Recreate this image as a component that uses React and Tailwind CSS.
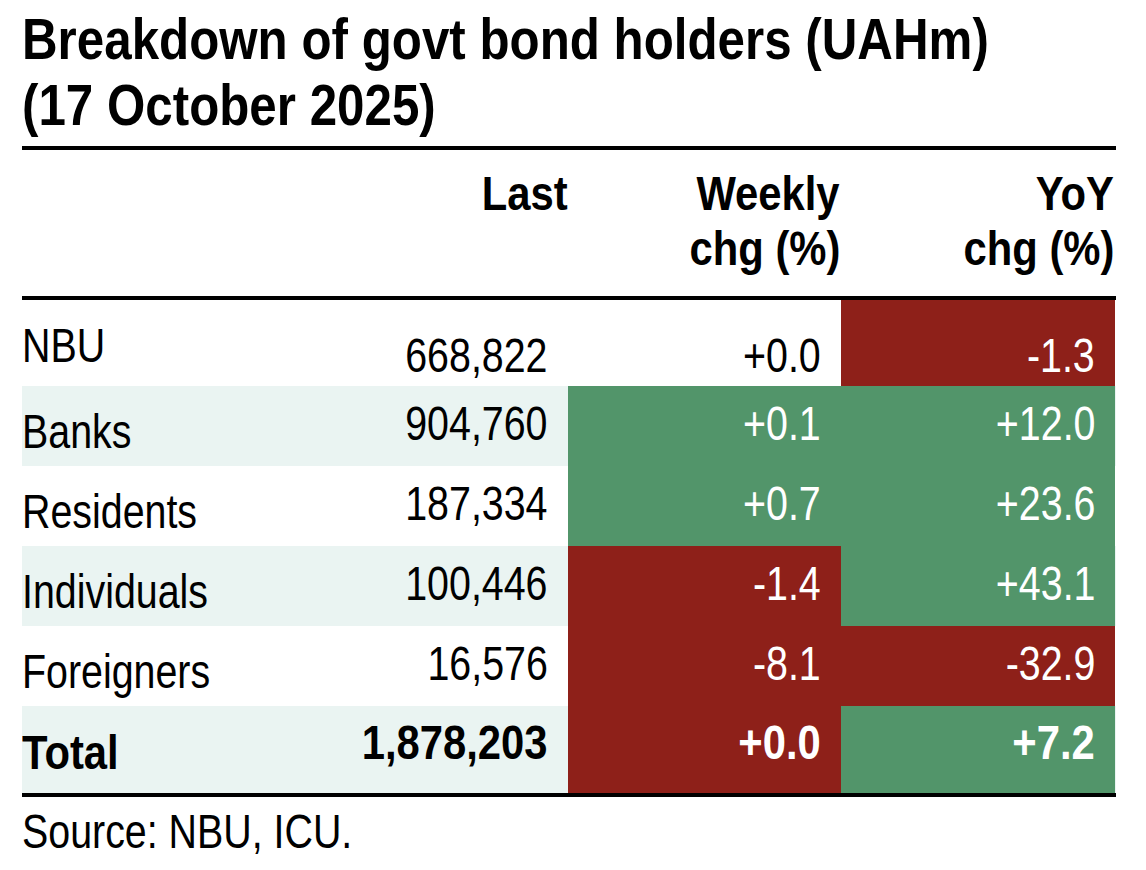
import React from 'react'

const RED = 'bg-[#8e2019] text-white'
const GREEN = 'bg-[#52956a] text-white'

const rows = [
    { name: 'NBU', last: '668,822', w: '+0.0', y: '-1.3', wc: '', yc: RED, bg: 'bg-white', h: 'h-[86px]', vp: 'pt-[32px]' },
    { name: 'Banks', last: '904,760', w: '+0.1', y: '+12.0', wc: GREEN, yc: GREEN, bg: 'bg-[#eaf4f2]', h: 'h-[80px]', vp: 'pt-[14px]' },
    { name: 'Residents', last: '187,334', w: '+0.7', y: '+23.6', wc: GREEN, yc: GREEN, bg: 'bg-white', h: 'h-[80px]', vp: 'pt-[14px]' },
    { name: 'Individuals', last: '100,446', w: '-1.4', y: '+43.1', wc: RED, yc: GREEN, bg: 'bg-[#eaf4f2]', h: 'h-[80px]', vp: 'pt-[14px]' },
    { name: 'Foreigners', last: '16,576', w: '-8.1', y: '-32.9', wc: RED, yc: RED, bg: 'bg-white', h: 'h-[80px]', vp: 'pt-[14px]' },
]

// condensed look: Liberation Sans squeezed horizontally
const Narrow = ({ children, right }) => (
    <span className={`inline-block whitespace-nowrap scale-x-[0.82] ${right ? 'origin-right' : 'origin-left'}`}>{children}</span>
)

const NarrowBold = ({ children, right }) => (
    <span className={`inline-block whitespace-nowrap scale-x-[0.87] ${right ? 'origin-right' : 'origin-left'}`}>{children}</span>
)

const App = () => {
    return (
        <div className="w-[1146px] h-[870px] overflow-hidden bg-white pl-[22px] pt-[6px] text-black font-['Liberation_Sans_Narrow','Liberation_Sans',Arial,sans-serif]">
            <h1 className="text-[58px] leading-[66px] font-bold">
                <span className="block whitespace-nowrap origin-left scale-x-[0.85]">Breakdown of govt bond holders (UAHm)</span>
                <span className="block whitespace-nowrap origin-left scale-x-[0.85]">(17 October 2025)</span>
            </h1>
            <div className="w-[1094px] mt-[8px] border-t-4 border-b-4 border-black">
                <div className="grid grid-cols-[546px_273px_1fr] h-[150px] border-b-4 border-black text-[48px] leading-[55px] font-bold text-right">
                    <div className="pt-[16px]">
                        <NarrowBold right>Last</NarrowBold>
                    </div>
                    <div className="pt-[16px] pr-[1px]">
                        <NarrowBold right>Weekly</NarrowBold>
                        <br />
                        <NarrowBold right>chg (%)</NarrowBold>
                    </div>
                    <div className="pt-[16px] pr-[2px]">
                        <NarrowBold right>YoY</NarrowBold>
                        <br />
                        <NarrowBold right>chg (%)</NarrowBold>
                    </div>
                </div>
                {rows.map((r) => (
                    <div key={r.name} className={`grid grid-cols-[546px_273px_1fr] ${r.h} ${r.bg} text-[48px] leading-none`}>
                        <div className="flex justify-between">
                            <div className="pt-[22px]">
                                <Narrow>{r.name}</Narrow>
                            </div>
                            <div className={`${r.vp} pr-5`}>
                                <Narrow right>{r.last}</Narrow>
                            </div>
                        </div>
                        <div className={`${r.vp} pr-5 text-right ${r.wc}`}>
                            <Narrow right>{r.w}</Narrow>
                        </div>
                        <div className={`${r.vp} pr-5 mr-[1px] text-right ${r.yc}`}>
                            <Narrow right>{r.y}</Narrow>
                        </div>
                    </div>
                ))}
                <div className="grid grid-cols-[546px_273px_1fr] h-[87px] bg-[#eaf4f2] text-[48px] leading-none font-bold">
                    <div className="flex justify-between">
                        <div className="pt-[23px]">
                            <NarrowBold>Total</NarrowBold>
                        </div>
                        <div className="pt-[13px] pr-5">
                            <NarrowBold right>1,878,203</NarrowBold>
                        </div>
                    </div>
                    <div className={`pt-[13px] pr-5 text-right ${RED}`}>
                        <NarrowBold right>+0.0</NarrowBold>
                    </div>
                    <div className={`pt-[13px] pr-5 mr-[1px] text-right ${GREEN}`}>
                        <NarrowBold right>+7.2</NarrowBold>
                    </div>
                </div>
            </div>
            <p className="text-[48px] leading-none pt-[11px]">
                <Narrow>Source: NBU, ICU.</Narrow>
            </p>
        </div>
    )
}

export default App
